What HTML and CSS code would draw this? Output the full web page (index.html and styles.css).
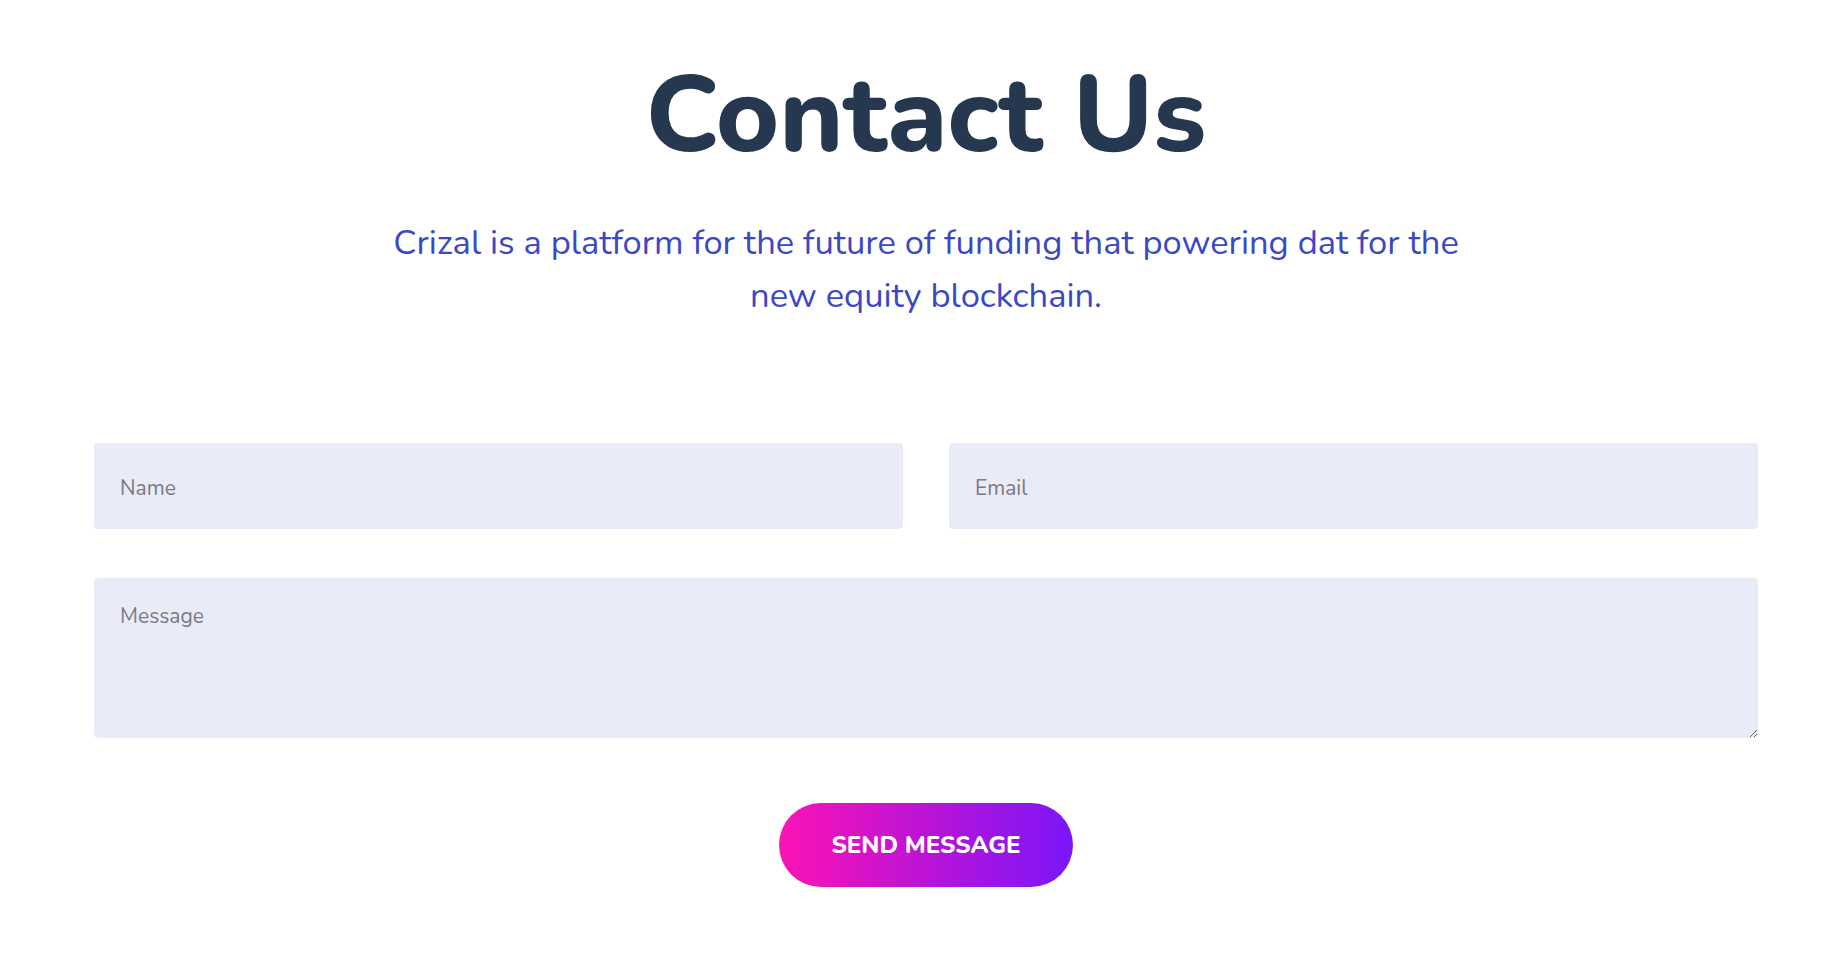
FILE: index.html
```html
<!DOCTYPE html>
<html lang="en">
<head>
<meta charset="UTF-8" />
<title>Contact Us</title>
<link rel="stylesheet" href="styles.css">
</head>
<body>
<section class="contact">
  <h1 class="contact-title">Contact Us</h1>
  <p class="contact-lead">Crizal is a platform for the future of funding that powering dat for the new equity blockchain.</p>

  <form class="contact-form" onsubmit="return false">
    <div class="form-row">
      <input type="text" class="field" placeholder="Name">
      <input type="email" class="field" placeholder="Email">
    </div>
    <textarea class="field field-message" placeholder="Message"></textarea>
    <div class="form-actions">
      <button type="submit" class="btn-send">Send Message</button>
    </div>
  </form>
</section>
</body>
</html>
```

FILE: styles.css
```css
body {
  margin: 0;
  background: #fff;
  font-family: "Nunito", Lato, "Open Sans", sans-serif;
  color: #25364d;
}
.contact {
  padding: 51px 77px 60px 94px;
  text-align: center;
}
.contact-title {
  margin: 0;
  font-size: 108px;
  line-height: 1.2;
  font-weight: 800;
  color: #263850;
}
.contact-lead {
  max-width: 1090px;
  margin: 35px auto 0;
  font-size: 34.5px;
  line-height: 53px;
  color: #3b48c6;
}
.contact-form {
  margin-top: 121px;
  display: flex;
  flex-direction: column;
  gap: 49px;
}
.form-row {
  display: grid;
  grid-template-columns: 1fr 1fr;
  gap: 46px;
}
.field {
  display: block;
  width: 100%;
  box-sizing: border-box;
  height: 86px;
  padding: 4px 26px 0;
  border: none;
  border-radius: 4px;
  background: #e9ebf8;
  font-family: inherit;
  font-size: 21px;
  color: #25364d;
  outline: none;
}
.field::placeholder {
  color: #7a7a80;
}
.field-message {
  height: 160px;
  padding: 24px 26px;
  resize: vertical;
}
.form-actions {
  margin-top: 16px;
}
.btn-send {
  width: 294px;
  height: 84px;
  border: none;
  border-radius: 42px;
  background: linear-gradient(90deg, #fc13b4 0%, #b414d9 55%, #7a16f9 100%);
  color: #fff;
  font-family: inherit;
  font-size: 24px;
  font-weight: 800;
  text-transform: uppercase;
  cursor: pointer;
}
```
